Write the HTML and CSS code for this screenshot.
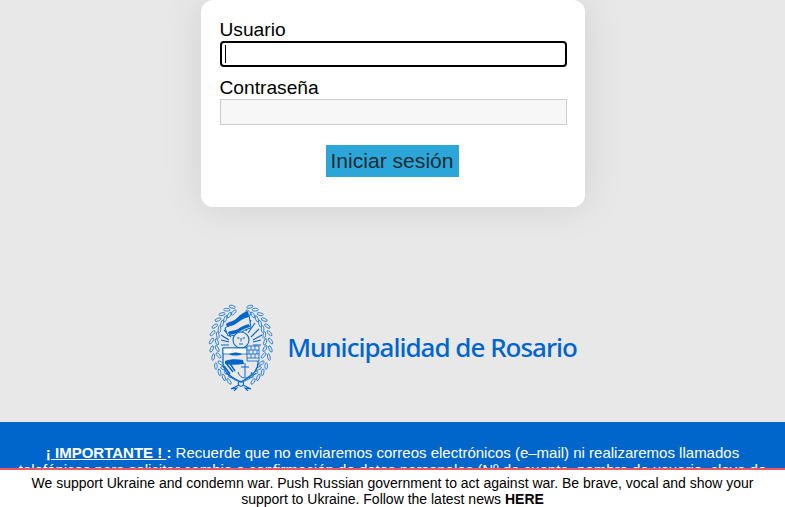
FILE: index.html
```html
<!DOCTYPE html>
<html lang="es">
<head>
  <meta charset="UTF-8">
  <meta name="viewport" content="width=device-width, initial-scale=1">
  <title>Municipalidad de Rosario</title>
  <link rel="stylesheet" href="styles.css">
</head>
<body>
  <form class="login">
    <label class="field-label" for="user">Usuario</label>
    <div class="field-wrap">
      <input class="field field-focus" id="user" type="text">
      <span class="caret"></span>
    </div>
    <label class="field-label" for="pass">Contraseña</label>
    <input class="field" id="pass" type="password">
    <div class="actions">
      <button class="submit" type="button">Iniciar sesión</button>
    </div>
  </form>

  <div class="brand">
    <svg class="emblem" width="70" height="88" viewBox="0 0 70 88" fill="none" stroke="#0066cc" stroke-width="1">
      <defs>
        <g id="leaf">
          <ellipse cx="-2.500" cy="-2" rx="3.400" ry="1.400" transform="rotate(28)"/>
          <ellipse cx="-2.500" cy="2" rx="3.400" ry="1.400" transform="rotate(-28)"/>
        </g>
        <g id="wreath" stroke-width=".75">
          <use href="#leaf" transform="translate(27.5 6.3) rotate(-15)"/>
          <use href="#leaf" transform="translate(22.2 8.800) rotate(-26)"/>
          <use href="#leaf" transform="translate(17.3 12.7) rotate(-38)"/>
          <use href="#leaf" transform="translate(13.2 17.600) rotate(-49)"/>
          <use href="#leaf" transform="translate(9.900 23.500) rotate(-60)"/>
          <use href="#leaf" transform="translate(7.600 30) rotate(-71)"/>
          <use href="#leaf" transform="translate(6.300 37.200) rotate(-82)"/>
          <use href="#leaf" transform="translate(6.300 44.500) rotate(-94)"/>
          <use href="#leaf" transform="translate(7.600 52) rotate(-106)"/>
          <use href="#leaf" transform="translate(9.900 60.500) rotate(-120)"/>
          <use href="#leaf" transform="translate(13.200 66.400) rotate(-131)"/>
          <use href="#leaf" transform="translate(17.300 71.300) rotate(-142)"/>
          <use href="#leaf" transform="translate(22.200 75.200) rotate(-154)"/>
        </g>
      </defs>
      <g transform="translate(3.500 0) scale(.93 1)">
        <use href="#wreath"/>
        <use href="#wreath" transform="translate(70 0) scale(-1 1)"/>
      </g>
      <!-- sun rays -->
      <path d="M16 37l8 2M16 32l8 5M19 27l7 7M56 37l-8 2M57 32l-9 5M54 26l-8 8M50 20l-7 10M46 17l-5 11M16 42h8M56 42h-8" stroke-width="1.100"/>
      <!-- flag -->
      <path d="M20 25c4-3 8-2 12-6s7-6 12-7l2 13c-5 1-8 3-12 6s-8 0-11 2z" fill="#e8e8e8" stroke-width="1"/>
      <path d="M21 21c4-3 7-2 11-6s7-6 11-7l1 6c-5 1-8 3-12 6s-7 2-10 4z" fill="#0066cc" stroke="none"/>
      <path d="M23 29c4-2 7-1 10-3s6-4 11-5l1 3c-5 1-8 3-11 5s-7 2-10 3z" fill="#0066cc" stroke="none"/>
      <!-- sun face -->
      <circle cx="36" cy="37" r="8" fill="#e8e8e8" stroke-width="1.100"/>
      <path d="M32 35h2.500M37.500 35h2.500M36 35v3.500M34 41h4" stroke-width="1"/>
      <!-- shield -->
      <path d="M18 45h35v15c0 9-9 15-17 19-9-4-18-10-18-19z" fill="#e8e8e8" stroke-width="1.200"/>
      <path d="M18 45h24v6H18z" fill="#fff" stroke-width=".8"/>
      <path d="M24 51c4-2 8-2 13 0-3 2-10 2-13 0zM20 58c5-2 12-2 18-1l1 4c-7 1-14 1-19 0z" fill="#0066cc" stroke="none"/>
      <!-- wall -->
      <path d="M42 43h12v15H42zM42 47h12M42 51h12M42 55h12M46 43v4M50 43v4M44 47v4M48 47v4M52 47v4M46 51v4M50 51v4" stroke-width=".8" fill="#e8e8e8"/>
      <!-- wheat and anchor -->
      <path d="M21 60l7 9M24 59l6 9M19 63l6 8" stroke-width="1.500"/>
      <path d="M40 60v14M36 64h8M33 69c1 4 4 6 7 6s6-2 7-6" stroke-width="1"/>
      <path d="M21 70c6 6 10 8 15 9 5-1 9-3 15-9" stroke-width=".9"/>
      <!-- ribbon -->
      <path d="M36 78c-3 1-4 4-1 5s5-3 2-5M34 82l-8 4 6-1-3 3M38 82l8 4-6-1 3 3" stroke-width="1.100"/>
    </svg>
    <span class="brand-name">Municipalidad de Rosario</span>
  </div>

  <section class="notice">
    <p><span class="notice-head"><u>¡ IMPORTANTE ! </u>:</span> Recuerde que no enviaremos correos electrónicos (e–mail) ni realizaremos llamados telefónicos para solicitar cambio o confirmación de datos personales (Nº de cuenta, nombre de usuario, clave de acceso).</p>
  </section>

  <div class="ukraine">
    We support Ukraine and condemn war. Push Russian government to act against war. Be brave, vocal and show your support to Ukraine. Follow the latest news <a href="#">HERE</a>
  </div>
</body>
</html>
```

FILE: styles.css
```css
* {
  box-sizing: border-box;
}

html, body {
  height: 507px;
  overflow: hidden;
}

body {
  margin: 0;
  background: #e8e8e8;
  font-family: "Liberation Sans", Arial, sans-serif;
}

.login {
  display: flex;
  flex-direction: column;
  width: 384px;
  height: 207px;
  margin: 0 auto;
  padding: 19px 18px 30px 19px;
  background: #fff;
  border-radius: 12px;
  box-shadow: 0 0 40px rgba(0, 0, 0, .1);
}

.field-label {
  font-size: 19.2px;
  line-height: 22px;
  color: #000;
}

.field-wrap {
  position: relative;
  margin-bottom: 10px;
}

.field {
  display: block;
  width: 100%;
  height: 26px;
  padding: 0 4px;
  background: #f7f7f7;
  border: 1px solid #cccccc;
  border-radius: 0;
  font-size: 15px;
  color: #000;
}

.field-focus {
  background: #fff;
  border: 2px solid #000;
  border-radius: 4px;
}

.caret {
  position: absolute;
  left: 5px;
  top: 4px;
  width: 1px;
  height: 18px;
  background: #000;
}

.actions {
  display: flex;
  justify-content: center;
  margin-top: 20px;
}

.submit {
  width: 133px;
  height: 32px;
  margin-right: 2px;
  padding: 0;
  background: #2ca6d9;
  border: 0;
  font-family: inherit;
  font-size: 21.12px;
  color: #1d2b33;
}

.brand {
  display: flex;
  align-items: center;
  justify-content: center;
  gap: 12px;
  height: 88px;
  margin-top: 96px;
  padding-right: 3px;
}

.brand-name {
  font-family: "Noto Sans", sans-serif;
  font-size: 26px;
  font-weight: 500;
  letter-spacing: -1px;
  color: #0066cc;
}

.notice {
  height: 100px;
  margin-top: 31px;
  padding: 22px 15px 0;
  background: #0066cc;
  color: #fff;
  font-size: 15px;
  line-height: 17px;
  text-align: center;
}

.notice p {
  margin: 0;
}

.notice-head {
  font-weight: bold;
}

.ukraine {
  position: fixed;
  left: 0;
  right: 0;
  bottom: 0;
  height: 39px;
  padding: 6px 20px 0;
  background: #fff;
  border-top: 2px solid #f2555f;
  color: #000;
  font-size: 14px;
  line-height: 15.5px;
  text-align: center;
}

.ukraine a {
  font-weight: bold;
  color: #000;
  text-decoration: none;
}
```
